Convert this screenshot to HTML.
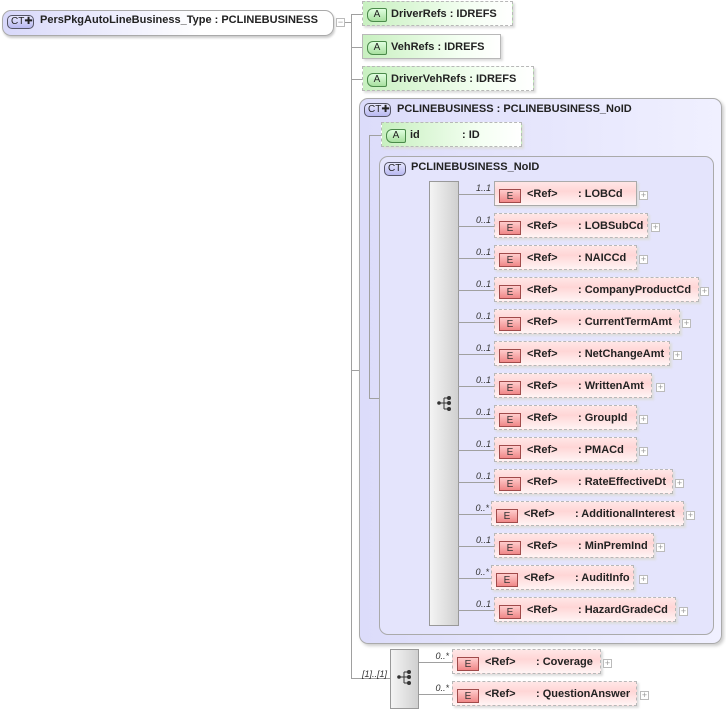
<!DOCTYPE html>
<html><head><meta charset="utf-8"><style>
body{margin:0;width:726px;height:713px;background:#fff;position:relative;overflow:hidden;font-family:"Liberation Sans",sans-serif;font-size:11px;font-weight:bold;color:#222}
div{position:absolute;box-sizing:border-box}
.l{background:#a0a0a0}
.attr{height:25px;background:linear-gradient(90deg,#c8f0c0,#f4fff2 70%,#fff);border:1px dashed #b8b8b8;box-shadow:2px 2px 2px #ddd}
.attr.s{border-style:solid}
.ai{left:4px;top:6px;width:20px;height:14px;border:1px solid #4a8a4a;border-radius:6px 2px 2px 6px;background:linear-gradient(#e0ffe0,#a8e0a0);font-size:10px;font-weight:normal;text-align:center;line-height:12px}
.el{height:25px;background:linear-gradient(#ffe6e6,#ffd6d6 40%,#fff4f4);border:1px dashed #b8b8b8;box-shadow:2px 2px 2px #ddd}
.el.s{border:1px solid #aaa}
.ei{left:4px;top:7px;width:22px;height:14px;border:1px solid #a04a4a;background:linear-gradient(#ffcccc,#f08888);font-size:10px;font-weight:normal;text-align:center;line-height:13px;color:#333}
.t{white-space:nowrap;top:6px}
.pl{width:9px;height:9px;border:1px solid #bbb;background:#fff;font-size:9px;line-height:7px;text-align:center;color:#999;font-weight:normal}
.c{font-style:italic;font-weight:normal;font-size:9px;color:#333;text-align:right;white-space:nowrap}
.ct{height:14px;border:1px solid #556;border-radius:5px;background:linear-gradient(#e8e8ff,#b8b8f0);font-size:10px;font-weight:normal;line-height:12px;padding-left:3px}
</style></head><body>

<!-- root -->
<div style="left:2px;top:10px;width:332px;height:26px;border:1px solid #aaa;border-radius:9px;background:linear-gradient(90deg,#d8d8fa,#fff 60%);box-shadow:1px 2px 2px #ccc"></div>
<div class="ct" style="left:7px;top:15px;width:27px">CT&#x271A;</div>
<div class="t" style="left:40px;top:14px">PersPkgAutoLineBusiness_Type : PCLINEBUSINESS</div>
<div class="pl" style="left:336px;top:18px">−</div>

<!-- tree lines -->
<div class="l" style="left:345px;top:22px;width:6px;height:1px"></div>
<div class="l" style="left:351px;top:14px;width:1px;height:665px"></div>
<div class="l" style="left:351px;top:14px;width:12px;height:1px"></div>
<div class="l" style="left:351px;top:47px;width:12px;height:1px"></div>
<div class="l" style="left:351px;top:79px;width:12px;height:1px"></div>
<div class="l" style="left:351px;top:370px;width:8px;height:1px"></div>
<div class="l" style="left:351px;top:678px;width:39px;height:1px"></div>

<!-- attrs -->
<div class="attr" style="left:362px;top:1px;width:151px"><div class="ai">A</div><div class="t" style="left:28px">DriverRefs : IDREFS</div></div>
<div class="attr s" style="left:362px;top:34px;width:139px"><div class="ai">A</div><div class="t" style="left:28px">VehRefs : IDREFS</div></div>
<div class="attr" style="left:362px;top:66px;width:172px"><div class="ai">A</div><div class="t" style="left:28px">DriverVehRefs : IDREFS</div></div>

<!-- big CT -->
<div style="left:359px;top:98px;width:363px;height:546px;border:1px solid #aaa;border-radius:9px;background:linear-gradient(90deg,#dcdcfa,#f0f0ff);box-shadow:2px 2px 3px #ccc"></div>
<div class="ct" style="left:364px;top:103px;width:27px">CT&#x271A;</div>
<div class="t" style="left:397px;top:103px">PCLINEBUSINESS : PCLINEBUSINESS_NoID</div>
<div class="l" style="left:369px;top:135px;width:1px;height:264px"></div>
<div class="l" style="left:369px;top:135px;width:12px;height:1px"></div>
<div class="l" style="left:369px;top:398px;width:60px;height:1px"></div>
<div class="c" style="left:380px;top:390px;width:46px">[1]..[1]</div>
<div class="attr" style="left:381px;top:122px;width:141px"><div class="ai">A</div><div class="t" style="left:28px">id</div><div class="t" style="left:80px">: ID</div></div>

<div style="left:379px;top:156px;width:335px;height:479px;border:1px solid #aaa;border-radius:9px;background:#e4e4fc"></div>
<div class="ct" style="left:384px;top:162px;width:22px">CT</div>
<div class="t" style="left:411px;top:161px">PCLINEBUSINESS_NoID</div>
<div style="left:429px;top:181px;width:30px;height:445px;border:1px solid #999;background:linear-gradient(90deg,#f4f4f4,#d0d0d0)"></div>
<svg style="position:absolute;left:436px;top:395px" width="18" height="18" viewBox="0 0 18 18"><circle cx="3" cy="8" r="1.8" fill="#333"/><path d="M3 8H8M8 3V14M8 3H13M8 8H13M8 14H13" stroke="#333" fill="none"/><circle cx="13" cy="3" r="2" fill="#333"/><circle cx="13" cy="8" r="2" fill="#333"/><circle cx="13" cy="14" r="2" fill="#333"/></svg>

<!-- inner elements -->
<div id="els"></div>
<script></script>
<div class="l" style="left:458px;top:194px;width:36px;height:1px"></div><div class="c" style="left:460px;top:183px;width:31px">1..1</div><div class="el s" style="left:494px;top:181px;width:143px"><div class="ei">E</div><div class="t" style="left:32px">&lt;Ref&gt;</div><div class="t" style="left:83px">: LOBCd</div></div><div class="pl" style="left:639px;top:191px">+</div>
<div class="l" style="left:458px;top:226px;width:36px;height:1px"></div><div class="c" style="left:460px;top:215px;width:31px">0..1</div><div class="el" style="left:494px;top:213px;width:154px"><div class="ei">E</div><div class="t" style="left:32px">&lt;Ref&gt;</div><div class="t" style="left:83px">: LOBSubCd</div></div><div class="pl" style="left:651px;top:223px">+</div>
<div class="l" style="left:458px;top:258px;width:36px;height:1px"></div><div class="c" style="left:460px;top:247px;width:31px">0..1</div><div class="el" style="left:494px;top:245px;width:143px"><div class="ei">E</div><div class="t" style="left:32px">&lt;Ref&gt;</div><div class="t" style="left:83px">: NAICCd</div></div><div class="pl" style="left:639px;top:255px">+</div>
<div class="l" style="left:458px;top:290px;width:36px;height:1px"></div><div class="c" style="left:460px;top:279px;width:31px">0..1</div><div class="el" style="left:494px;top:277px;width:205px"><div class="ei">E</div><div class="t" style="left:32px">&lt;Ref&gt;</div><div class="t" style="left:83px">: CompanyProductCd</div></div><div class="pl" style="left:700px;top:287px">+</div>
<div class="l" style="left:458px;top:322px;width:36px;height:1px"></div><div class="c" style="left:460px;top:311px;width:31px">0..1</div><div class="el" style="left:494px;top:309px;width:186px"><div class="ei">E</div><div class="t" style="left:32px">&lt;Ref&gt;</div><div class="t" style="left:83px">: CurrentTermAmt</div></div><div class="pl" style="left:682px;top:319px">+</div>
<div class="l" style="left:458px;top:354px;width:36px;height:1px"></div><div class="c" style="left:460px;top:343px;width:31px">0..1</div><div class="el" style="left:494px;top:341px;width:176px"><div class="ei">E</div><div class="t" style="left:32px">&lt;Ref&gt;</div><div class="t" style="left:83px">: NetChangeAmt</div></div><div class="pl" style="left:673px;top:351px">+</div>
<div class="l" style="left:458px;top:386px;width:36px;height:1px"></div><div class="c" style="left:460px;top:375px;width:31px">0..1</div><div class="el" style="left:494px;top:373px;width:158px"><div class="ei">E</div><div class="t" style="left:32px">&lt;Ref&gt;</div><div class="t" style="left:83px">: WrittenAmt</div></div><div class="pl" style="left:656px;top:383px">+</div>
<div class="l" style="left:458px;top:418px;width:36px;height:1px"></div><div class="c" style="left:460px;top:407px;width:31px">0..1</div><div class="el" style="left:494px;top:405px;width:143px"><div class="ei">E</div><div class="t" style="left:32px">&lt;Ref&gt;</div><div class="t" style="left:83px">: GroupId</div></div><div class="pl" style="left:639px;top:415px">+</div>
<div class="l" style="left:458px;top:450px;width:36px;height:1px"></div><div class="c" style="left:460px;top:439px;width:31px">0..1</div><div class="el" style="left:494px;top:437px;width:143px"><div class="ei">E</div><div class="t" style="left:32px">&lt;Ref&gt;</div><div class="t" style="left:83px">: PMACd</div></div><div class="pl" style="left:639px;top:447px">+</div>
<div class="l" style="left:458px;top:482px;width:36px;height:1px"></div><div class="c" style="left:460px;top:471px;width:31px">0..1</div><div class="el" style="left:494px;top:469px;width:179px"><div class="ei">E</div><div class="t" style="left:32px">&lt;Ref&gt;</div><div class="t" style="left:83px">: RateEffectiveDt</div></div><div class="pl" style="left:675px;top:479px">+</div>
<div class="l" style="left:458px;top:514px;width:33px;height:1px"></div><div class="c" style="left:460px;top:503px;width:29px">0..*</div><div class="el" style="left:491px;top:501px;width:193px"><div class="ei">E</div><div class="t" style="left:32px">&lt;Ref&gt;</div><div class="t" style="left:83px">: AdditionalInterest</div></div><div class="pl" style="left:686px;top:511px">+</div>
<div class="l" style="left:458px;top:546px;width:36px;height:1px"></div><div class="c" style="left:460px;top:535px;width:31px">0..1</div><div class="el" style="left:494px;top:533px;width:160px"><div class="ei">E</div><div class="t" style="left:32px">&lt;Ref&gt;</div><div class="t" style="left:83px">: MinPremInd</div></div><div class="pl" style="left:656px;top:543px">+</div>
<div class="l" style="left:458px;top:578px;width:33px;height:1px"></div><div class="c" style="left:460px;top:567px;width:29px">0..*</div><div class="el" style="left:491px;top:565px;width:143px"><div class="ei">E</div><div class="t" style="left:32px">&lt;Ref&gt;</div><div class="t" style="left:83px">: AuditInfo</div></div><div class="pl" style="left:639px;top:575px">+</div>
<div class="l" style="left:458px;top:610px;width:36px;height:1px"></div><div class="c" style="left:460px;top:599px;width:31px">0..1</div><div class="el" style="left:494px;top:597px;width:182px"><div class="ei">E</div><div class="t" style="left:32px">&lt;Ref&gt;</div><div class="t" style="left:83px">: HazardGradeCd</div></div><div class="pl" style="left:679px;top:607px">+</div>

<!-- bottom sequence -->
<div class="c" style="left:355px;top:669px;width:32px">[1]..[1]</div>
<div style="left:390px;top:649px;width:29px;height:60px;border:1px solid #999;background:linear-gradient(90deg,#f4f4f4,#d0d0d0)"></div>
<svg style="position:absolute;left:396px;top:669px" width="18" height="18" viewBox="0 0 18 18"><circle cx="3" cy="8" r="1.8" fill="#333"/><path d="M3 8H8M8 3V14M8 3H13M8 8H13M8 14H13" stroke="#333" fill="none"/><circle cx="13" cy="3" r="2" fill="#333"/><circle cx="13" cy="8" r="2" fill="#333"/><circle cx="13" cy="14" r="2" fill="#333"/></svg>
<div class="l" style="left:419px;top:662px;width:33px;height:1px"></div><div class="c" style="left:420px;top:651px;width:29px">0..*</div><div class="el" style="left:452px;top:649px;width:149px"><div class="ei">E</div><div class="t" style="left:32px">&lt;Ref&gt;</div><div class="t" style="left:83px">: Coverage</div></div><div class="pl" style="left:603px;top:659px">+</div>
<div class="l" style="left:419px;top:694px;width:33px;height:1px"></div><div class="c" style="left:420px;top:683px;width:29px">0..*</div><div class="el" style="left:452px;top:681px;width:185px"><div class="ei">E</div><div class="t" style="left:32px">&lt;Ref&gt;</div><div class="t" style="left:83px">: QuestionAnswer</div></div><div class="pl" style="left:640px;top:691px">+</div>

</body></html>
